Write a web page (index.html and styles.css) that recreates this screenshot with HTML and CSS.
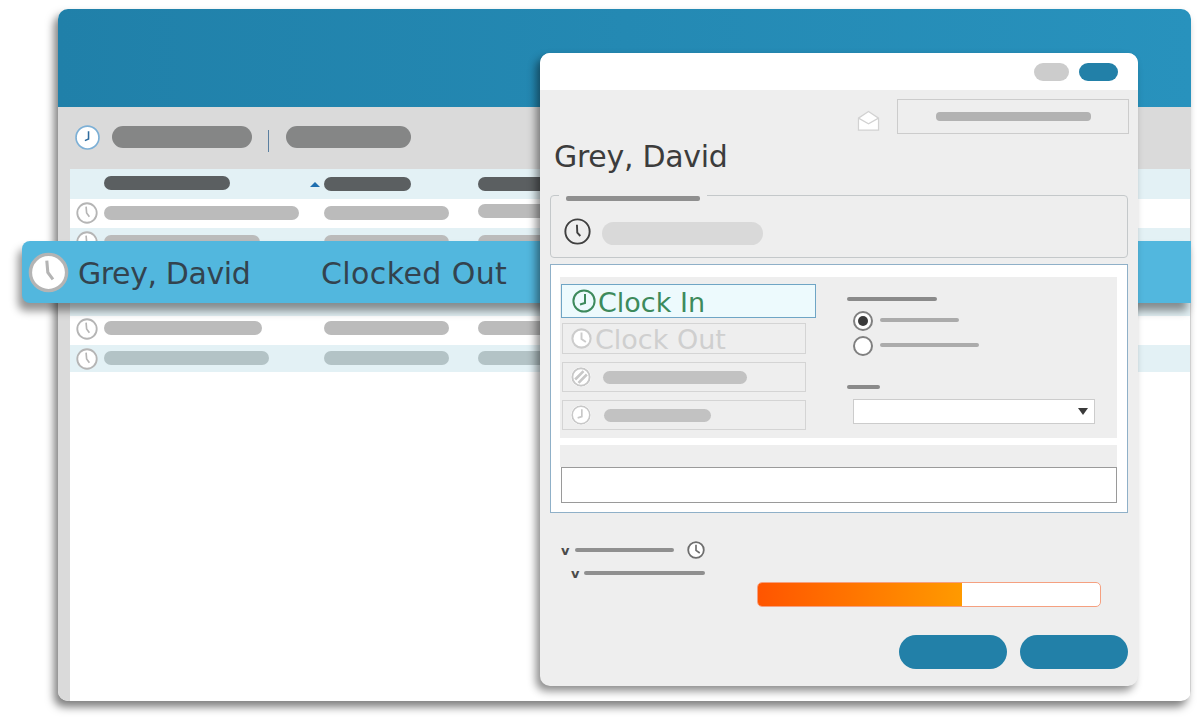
FILE: index.html
```html
<!DOCTYPE html>
<html lang="en">
<head>
    <meta charset="UTF-8">
    <meta name="viewport" content="width=device-width, initial-scale=1.0">
    <title>Time Clock</title>
    <link rel="stylesheet" href="styles.css">
</head>
<body>
    <svg class="sprite" xmlns="http://www.w3.org/2000/svg">
        <symbol id="clock-list" viewBox="0 0 24 24">
            <circle cx="12" cy="12" r="10.6" fill="#fff" stroke="currentColor" stroke-width="2"/>
            <polyline points="11,5 11.6,12 14.6,16" fill="none" stroke="currentColor" stroke-width="1.8"/>
        </symbol>
        <symbol id="clock-hollow" viewBox="0 0 24 24">
            <circle cx="12" cy="12" r="10.8" fill="none" stroke="currentColor" stroke-width="1.7"/>
            <polyline points="11.500,6 11.800,13 14.500,16" fill="none" stroke="currentColor" stroke-width="1.7"/>
        </symbol>
        <symbol id="clock-active" viewBox="0 0 24 24">
            <circle cx="12" cy="12" r="10.6" fill="none" stroke="currentColor" stroke-width="2"/>
            <polyline points="13,5 13,14 8,15.5" fill="none" stroke="currentColor" stroke-width="2"/>
        </symbol>
        <symbol id="clock-off" viewBox="0 0 24 24">
            <circle cx="12" cy="12" r="10.4" fill="#fff" stroke="currentColor" stroke-width="2.4"/>
            <polyline points="12,5 12,12.5 17,16" fill="none" stroke="currentColor" stroke-width="2.2"/>
        </symbol>
    </svg>

    <div class="desktop">
        <div class="main-window">
            <div class="main-header"></div>
            <div class="toolbar">
                <svg class="icon-toolbar" viewBox="0 0 24 24">
                    <circle cx="12" cy="12" r="11" fill="#fff" stroke="#7db0d6" stroke-width="1.600"/>
                    <polyline points="13,6 13,13.500 9.500,15" fill="none" stroke="#2f6c9e" stroke-width="1.500"/>
                </svg>
                <span class="pill-dark pill-first"></span>
                <span class="divider"></span>
                <span class="pill-dark pill-second"></span>
            </div>
            <div class="main-body">
                <div class="sidebar"></div>
                <div class="table">
                    <div class="row row-head">
                        <span></span>
                        <span class="bar-head bar-name"></span>
                        <span class="sort-cell"><i class="sort-arrow"></i><span class="bar-head bar-status"></span></span>
                        <span class="bar-head bar-third"></span>
                    </div>
                    <div class="row">
                        <svg class="icon-row"><use href="#clock-list"/></svg>
                        <span class="bar w195"></span>
                        <span class="bar w125"></span>
                        <span class="bar bar-raised w120"></span>
                    </div>
                    <div class="row row-tint">
                        <svg class="icon-row"><use href="#clock-list"/></svg>
                        <span class="bar w156"></span>
                        <span class="bar w125"></span>
                        <span class="bar w120"></span>
                    </div>
                    <div class="row"></div>
                    <div class="row row-tint row-tall"></div>
                    <div class="row row-up">
                        <svg class="icon-row"><use href="#clock-list"/></svg>
                        <span class="bar w158"></span>
                        <span class="bar w125"></span>
                        <span class="bar w120"></span>
                    </div>
                    <div class="row row-tint row-last">
                        <svg class="icon-row"><use href="#clock-list"/></svg>
                        <span class="bar bar-tint w165"></span>
                        <span class="bar bar-tint w125"></span>
                        <span class="bar bar-tint w120"></span>
                    </div>
                </div>
            </div>
        </div>

        <div class="highlight">
            <svg class="icon-highlight"><use href="#clock-list"/></svg>
            <span class="highlight-name">Grey, David</span>
            <span class="highlight-status">Clocked Out</span>
        </div>

        <div class="dialog">
            <div class="dialog-title">
                <span class="title-btn title-btn-grey"></span>
                <span class="title-btn title-btn-blue"></span>
            </div>
            <div class="dialog-body">
                <div class="top-row">
                    <svg class="icon-mail" viewBox="0 0 24 22">
                        <path d="M1.5 8.500 12 1.500l10.500 7v12.500h-21z" fill="#fff" stroke="#d2d2d2" stroke-width="1.300"/>
                        <path d="M1.500 8.500 12 14.500l10.500-6" fill="none" stroke="#d2d2d2" stroke-width="1.300"/>
                    </svg>
                    <div class="top-box"><span class="top-box-bar"></span></div>
                </div>
                <h1 class="dialog-name">Grey, David</h1>

                <div class="status-group">
                    <div class="status-legend"><span class="status-legend-bar"></span></div>
                    <div class="status-content">
                        <svg class="icon-status"><use href="#clock-hollow"/></svg>
                        <span class="status-pill"></span>
                    </div>
                </div>

                <div class="action-panel">
                    <div class="action-top">
                        <div class="action-buttons">
                            <div class="action action-on">
                                <svg class="icon-action"><use href="#clock-active"/></svg>Clock In
                            </div>
                            <div class="action action-off">
                                <svg class="icon-action"><use href="#clock-off"/></svg>Clock Out
                            </div>
                            <div class="action action-small">
                                <svg class="icon-action" viewBox="0 0 24 24">
                                    <circle cx="12" cy="12" r="10.400" fill="#fff" stroke="#c8c8c8" stroke-width="2.400"/>
                                    <path d="M5 15 15 5M9 19 19 9" stroke="#c8c8c8" stroke-width="3.200"/>
                                </svg>
                                <span class="action-bar w144"></span>
                            </div>
                            <div class="action action-small">
                                <svg class="icon-action"><use href="#clock-active"/></svg>
                                <span class="action-bar action-bar-low w106"></span>
                            </div>
                        </div>
                        <div class="options">
                            <span class="opt-head w90"></span>
                            <div class="radio-row">
                                <span class="radio radio-on"></span>
                                <span class="radio-label w79"></span>
                            </div>
                            <div class="radio-row">
                                <span class="radio"></span>
                                <span class="radio-label w99"></span>
                            </div>
                            <span class="opt-head opt-head-small w33"></span>
                            <div class="select"><i class="select-arrow"></i></div>
                        </div>
                    </div>
                    <div class="note-strip"></div>
                    <div class="note-input"></div>
                </div>

                <div class="lower">
                    <div class="tree">
                        <div class="tree-row">
                            <span class="tree-caret">v</span>
                            <span class="tree-bar w99"></span>
                            <svg class="icon-tree"><use href="#clock-off"/></svg>
                        </div>
                        <div class="tree-row tree-row-sub">
                            <span class="tree-caret">v</span>
                            <span class="tree-bar w121"></span>
                        </div>
                    </div>
                    <div class="progress"><div class="progress-fill" style="width: 59.7%"></div></div>
                </div>

                <div class="dialog-actions">
                    <span class="dialog-btn"></span>
                    <span class="dialog-btn"></span>
                </div>
            </div>
        </div>
    </div>
</body>
</html>
```

FILE: styles.css
```css
* {
    box-sizing: border-box;
}

body {
    margin: 0;
    background-color: #ffffff;
    font-family: 'DejaVu Sans', 'Liberation Sans', sans-serif;
    overflow: hidden;
}

.sprite {
    display: none;
}

.desktop {
    position: relative;
    width: 1200px;
    height: 724px;
}

/* back window */
.main-window {
    position: absolute;
    left: 58px;
    top: 9px;
    width: 1133px;
    height: 692px;
    display: flex;
    flex-direction: column;
    background-color: #ffffff;
    border-radius: 10px;
    overflow: hidden;
    box-shadow: -4px 6px 9px rgba(0, 0, 0, 0.5);
}

.main-header {
    height: 98px;
    background: linear-gradient(90deg, #2080a9, #2892bd);
}

.toolbar {
    height: 62px;
    display: flex;
    align-items: center;
    padding: 0 0 2px 17px;
    background-color: #dadada;
}

.icon-toolbar {
    width: 25px;
    height: 25px;
}

.pill-dark {
    height: 22px;
    background-color: #858686;
    border-radius: 11px;
}

.pill-first {
    width: 140px;
    margin-left: 12px;
}

.pill-second {
    width: 125px;
    margin-left: 17px;
}

.divider {
    width: 1px;
    height: 22px;
    margin: 8px 0 0 16px;
    background-color: #5a7fa0;
}

.main-body {
    flex: 1;
    display: flex;
}

.sidebar {
    width: 12px;
    background-color: #dadada;
}

.table {
    flex: 1;
    border-right: 1px solid #cfcfcf;
}

.row {
    height: 29px;
    display: grid;
    grid-template-columns: 34px 220px 154px 1fr;
    align-items: center;
    padding-bottom: 2px;
}

.row-head {
    height: 30px;
    padding-bottom: 0;
    background-color: #e3f1f5;
}

.row-tint {
    background-color: #e3f1f5;
}

.row-tall {
    height: 30px;
}

.row-up {
    padding-bottom: 5px;
}

.row-last {
    height: 27px;
    padding-bottom: 3px;
}

.icon-row {
    width: 22px;
    height: 22px;
    margin-left: 6px;
    color: #b5b5b5;
}

.row-up .icon-row {
    margin-top: 2px;
}

.row-last .icon-row {
    margin-top: 3px;
}

.bar {
    display: block;
    height: 14px;
    background-color: #bbbbbb;
    border-radius: 7px;
}

.bar-tint {
    background-color: #b3c3c6;
}

.bar-raised {
    margin-top: -4px;
}

.bar-head {
    display: block;
    height: 14px;
    background-color: #5b5f61;
    border-radius: 7px;
}

.bar-name {
    width: 126px;
    margin-top: -3px;
}

.bar-status {
    width: 87px;
}

.bar-third {
    width: 120px;
}

.sort-cell {
    display: flex;
    align-items: center;
    margin-left: -14px;
    gap: 4px;
}

.sort-arrow {
    width: 0;
    height: 0;
    border-left: 5px solid transparent;
    border-right: 5px solid transparent;
    border-bottom: 5px solid #1f6fb0;
}

.w195 { width: 195px; }
.w165 { width: 165px; }
.w158 { width: 158px; }
.w156 { width: 156px; }
.w144 { width: 144px; }
.w125 { width: 125px; }
.w121 { width: 121px; }
.w120 { width: 120px; }
.w106 { width: 107px; }
.w99 { width: 99px; }
.w90 { width: 90px; }
.w79 { width: 79px; }
.w33 { width: 33px; }

/* selected row pulled out of the list */
.highlight {
    position: absolute;
    left: 22px;
    top: 241px;
    width: 1169px;
    height: 62px;
    display: flex;
    align-items: center;
    padding: 2px 0 0 6px;
    background-color: #52b7de;
    border-radius: 8px 0 0 8px;
    box-shadow: -4px 8px 9px rgba(0, 0, 0, 0.42);
    color: #33434e;
    font-size: 30px;
}

.icon-highlight {
    width: 41px;
    height: 41px;
    margin-top: -2px;
    color: #b4b4b4;
}

.highlight-name {
    width: 243px;
    margin-left: 9px;
    letter-spacing: -0.4px;
}

.highlight-status {
    letter-spacing: 0.4px;
}

/* dialog */
.dialog {
    position: absolute;
    left: 540px;
    top: 53px;
    width: 598px;
    height: 633px;
    display: flex;
    flex-direction: column;
    background-color: #eeeeee;
    border-radius: 10px;
    overflow: hidden;
    box-shadow: -4px 5px 8px rgba(0, 0, 0, 0.45);
}

.dialog-title {
    height: 37px;
    flex-shrink: 0;
    display: flex;
    align-items: center;
    justify-content: flex-end;
    gap: 10px;
    padding-right: 20px;
    background-color: #ffffff;
}

.title-btn {
    height: 18px;
    border-radius: 9px;
}

.title-btn-grey {
    width: 35px;
    background-color: #cccccc;
}

.title-btn-blue {
    width: 39px;
    background-color: #2280a8;
}

.dialog-body {
    flex: 1;
    padding: 9px 10px 0;
}

.top-row {
    display: flex;
    align-items: center;
    justify-content: flex-end;
    gap: 17px;
    height: 35px;
    margin-right: -1px;
}

.icon-mail {
    width: 23px;
    height: 21px;
    margin-top: 8px;
}

.top-box {
    width: 232px;
    height: 35px;
    display: flex;
    align-items: center;
    justify-content: center;
    border: 1px solid #cccccc;
}

.top-box-bar {
    width: 155px;
    height: 9px;
    margin-top: -1px;
    background-color: #b2b2b2;
    border-radius: 4px;
}

.dialog-name {
    margin: 4px 0 0 4px;
    height: 47px;
    color: #3c3c3c;
    font-size: 30px;
    font-weight: 400;
    line-height: 38px;
    letter-spacing: -0.3px;
}

.status-group {
    height: 63px;
    margin-top: 10px;
    border: 1px solid #c4c8ca;
    border-radius: 4px;
}

.status-legend {
    width: 148px;
    height: 7px;
    margin: -1px 0 0 8px;
    padding: 1px 7px 0;
    background-color: #eeeeee;
}

.status-legend-bar {
    display: block;
    height: 5px;
    background-color: #8f8f8f;
    border-radius: 2px;
}

.status-content {
    display: flex;
    align-items: center;
    gap: 11px;
    margin: 16px 0 0 13px;
}

.icon-status {
    width: 27px;
    height: 27px;
    color: #404040;
}

.status-pill {
    width: 161px;
    height: 23px;
    margin-top: 4px;
    background-color: #d9d9d9;
    border-radius: 12px;
}

.action-panel {
    height: 249px;
    margin-top: 6px;
    padding: 12px 10px 0 9px;
    background-color: #ffffff;
    border: 1px solid #8fb0c8;
}

.action-top {
    height: 161px;
    display: flex;
    padding-top: 7px;
    background-color: #eeeeee;
}

.action-buttons {
    width: 287px;
    display: flex;
    flex-direction: column;
    flex-shrink: 0;
}

.action {
    display: flex;
    align-items: center;
    width: 244px;
    height: 31px;
    margin-left: 2px;
    margin-bottom: 8px;
    padding: 2px 0 0 8px;
    border: 1px solid #d4d4d4;
    font-size: 27px;
}

.action-on {
    width: 255px;
    height: 34px;
    margin-left: 1px;
    margin-bottom: 5px;
    padding-left: 10px;
    background-color: #edfafd;
    border-color: #6fa5c5;
    color: #3d8a5c;
}

.action-off {
    color: #cfcfcf;
}

.action-small {
    height: 30px;
    padding-top: 0;
}

.icon-action {
    width: 24px;
    height: 24px;
    margin: -2px 2px 0 0;
    flex-shrink: 0;
}

.action-off .icon-action {
    width: 21px;
    height: 21px;
    color: #cccccc;
    margin-right: 3px;
}

.action-small .icon-action {
    width: 20px;
    height: 20px;
    margin-top: 0;
    color: #c8c8c8;
    background-color: #fff;
    border-radius: 50%;
}

.action-bar {
    height: 13px;
    margin-left: 10px;
    background-color: #c2c2c2;
    border-radius: 7px;
}

.action-bar-low {
    margin: 1px 0 0 11px;
}

.options {
    flex: 1;
    display: flex;
    flex-direction: column;
    padding-top: 13px;
}

.opt-head {
    display: block;
    height: 4px;
    background-color: #8a8a8a;
    border-radius: 2px;
}

.opt-head-small {
    margin-top: 27px;
}

.radio-row {
    display: flex;
    align-items: center;
    gap: 7px;
    height: 25px;
    margin-left: 6px;
}

.opt-head + .radio-row {
    margin-top: 7px;
}

.radio {
    width: 20px;
    height: 20px;
    background-color: #ffffff;
    border: 2px solid #808080;
    border-radius: 50%;
    padding: 3px;
}

.radio-on::before {
    content: "";
    display: block;
    width: 10px;
    height: 10px;
    background-color: #3a3a3a;
    border-radius: 50%;
}

.radio-label {
    height: 4px;
    margin-top: -2px;
    background-color: #ababab;
    border-radius: 2px;
}

.select {
    display: flex;
    align-items: center;
    justify-content: flex-end;
    width: 242px;
    height: 25px;
    margin: 10px 0 0 6px;
    padding-right: 6px;
    background-color: #ffffff;
    border: 1px solid #cccccc;
}

.select-arrow {
    width: 0;
    height: 0;
    border-left: 5px solid transparent;
    border-right: 5px solid transparent;
    border-top: 7px solid #3a3a3a;
}

.note-strip {
    height: 22px;
    margin-top: 7px;
    background-color: #eeeeee;
}

.note-input {
    height: 36px;
    margin-left: 1px;
    background-color: #ffffff;
    border: 1px solid #9a9a9a;
}

.lower {
    position: relative;
    height: 122px;
    padding-top: 27px;
}

.tree {
    margin-left: 11px;
}

.tree-row {
    display: flex;
    align-items: center;
    height: 20px;
    margin-bottom: 3px;
}

.tree-row-sub {
    padding-left: 10px;
}

.tree-caret {
    width: 14px;
    color: #4a4a4a;
    font-size: 13px;
    font-weight: 700;
    line-height: 1;
}

.tree-bar {
    height: 4px;
    background-color: #8f8f8f;
    border-radius: 2px;
}

.tree-row-sub .tree-caret {
    width: 13px;
}

.icon-tree {
    width: 18px;
    height: 18px;
    margin-left: 13px;
    color: #6e6e6e;
}

.progress {
    position: absolute;
    left: 207px;
    top: 69px;
    width: 344px;
    height: 25px;
    background-color: #ffffff;
    border: 1px solid #f5a080;
    border-radius: 5px;
    overflow: hidden;
}

.progress-fill {
    height: 100%;
    background: linear-gradient(90deg, #ff5500, #ff9a00);
}

.dialog-actions {
    display: flex;
    justify-content: flex-end;
    gap: 13px;
}

.dialog-btn {
    width: 108px;
    height: 34px;
    background-color: #2280a8;
    border-radius: 17px;
}
```
